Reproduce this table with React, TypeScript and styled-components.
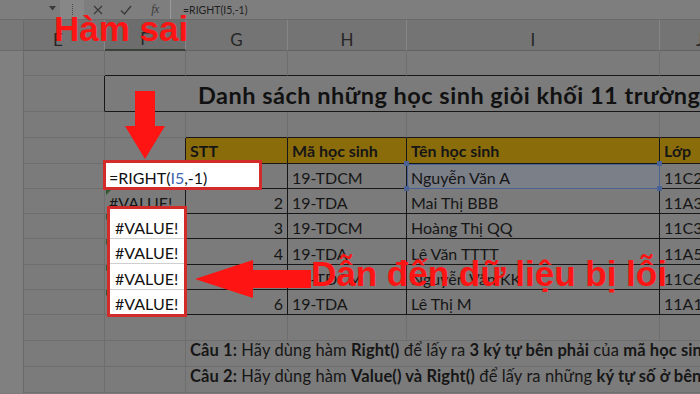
import React from 'react';
import styled, { createGlobalStyle } from 'styled-components';

const GlobalStyle = createGlobalStyle`
  html, body {
    margin: 0;
    padding: 0;
    background: #7b7b7b;
  }
  body {
    width: 700px;
    height: 394px;
    overflow: hidden;
    font-family: Lato, "Open Sans", sans-serif;
  }
`;

type Line = 'grid' | 'dark' | 'none';

const lineColor = (l: Line | undefined) =>
  l === 'dark' ? '#171717' : l === 'none' ? 'transparent' : '#6e6e6e';

type Row = {
  f?: string;
  stt: string;
  code: string;
  name: string;
  cls: string;
  selected?: boolean;
};

const rows: Row[] = [
  { stt: '', code: '19-TDCM', name: 'Nguyễn Văn A', cls: '11C2', selected: true },
  { f: '#VALUE!', stt: '2', code: '19-TDA', name: 'Mai Thị BBB', cls: '11A3' },
  { f: '#VALUE!', stt: '3', code: '19-TDCM', name: 'Hoàng Thị QQ', cls: '11C3' },
  { f: '#VALUE!', stt: '4', code: '19-TDA', name: 'Lê Văn TTTT', cls: '11A5' },
  { f: '#VALUE!', stt: '5', code: '19-TDCM', name: 'Nguyễn Văn KK', cls: '11C6' },
  { f: '#VALUE!', stt: '6', code: '19-TDA', name: 'Lê Thị M', cls: '11A1' },
];

const letters = ['E', 'F', 'G', 'H', 'I', 'J'];

const BlankRow: React.FC<{ bottom?: Line[] }> = ({ bottom = [] }) => (
  <>
    <RowHead />
    {letters.map((l, i) => (
      <Cell key={l} $bottom={bottom[i]} />
    ))}
  </>
);

export default function App() {
  return (
    <Page>
      <GlobalStyle />
      <FormulaBar>
        <NameBox />
        <Caret>
          <svg width="7" height="5" viewBox="0 0 7 5">
            <path d="M0 0 L7 0 L3.5 4.5 Z" fill="#3a3a3a" />
          </svg>
        </Caret>
        <Grip>
          <Dots />
        </Grip>
        <BarButton>
          <svg width="10" height="10" viewBox="0 0 10 10">
            <path d="M1 1 L9 9 M9 1 L1 9" stroke="#3b3b3b" strokeWidth="1.3" />
          </svg>
        </BarButton>
        <BarButton>
          <svg width="12" height="10" viewBox="0 0 12 10">
            <path d="M1 5.5 L4.5 9 L11 1" stroke="#3b3b3b" strokeWidth="1.4" fill="none" />
          </svg>
        </BarButton>
        <BarButton $wide>
          <Fx>fx</Fx>
        </BarButton>
        <Formula>=RIGHT(I5,-1)</Formula>
      </FormulaBar>

      <Sheet>
        <Corner />
        {letters.map((l) => (
          <ColHead key={l} $active={l === 'F'} $shift={l === 'E' ? 12 : 0}>
            {l}
          </ColHead>
        ))}

        <BlankRow bottom={['grid', 'dark', 'dark', 'dark', 'dark', 'dark']} />

        <RowHead />
        <Cell $right="dark" />
        <Title>Danh sách những học sinh giỏi khối 11 trường</Title>

        <BlankRow bottom={['grid', 'grid', 'dark', 'dark', 'dark', 'dark']} />

        <RowHead />
        <Cell />
        <Cell $right="dark" />
        <Cell $head $right="dark" $bottom="dark">STT</Cell>
        <Cell $head $right="dark" $bottom="dark">Mã học sinh</Cell>
        <Cell $head $right="dark" $bottom="dark">Tên học sinh</Cell>
        <Cell $head $right="dark" $bottom="dark">Lớp</Cell>

        {rows.map((r, i) => (
          <React.Fragment key={i}>
            <RowHead />
            <Cell />
            <Cell $right="dark" $flag={!!r.f}>
              {r.f}
            </Cell>
            <Cell $right="dark" $bottom="dark" $align="right">
              {r.stt}
            </Cell>
            <Cell $right="dark" $bottom="dark">
              {r.code}
            </Cell>
            <Cell $right="dark" $bottom="dark" $selected={r.selected}>
              {r.name}
              {r.selected && (
                <>
                  <Handle $x="left" $y="top" />
                  <Handle $x="left" $y="bottom" />
                  <Handle $x="right" $y="top" />
                  <Handle $x="right" $y="bottom" />
                </>
              )}
            </Cell>
            <Cell $right="dark" $bottom="dark">
              {r.cls}
            </Cell>
          </React.Fragment>
        ))}

        <BlankRow />

        <RowHead />
        <Cell />
        <Cell />
        <Note>
          <span>
            <b>Câu 1:</b> Hãy dùng hàm <b>Right()</b> để lấy ra <b>3 ký tự bên phải</b> của{' '}
            <b>mã học sinh</b>
          </span>
        </Note>

        <RowHead />
        <Cell />
        <Cell />
        <Note>
          <span>
            <b>Câu 2:</b> Hãy dùng hàm <b>Value() và Right()</b> để lấy ra những{' '}
            <b>ký tự số ở bên phải</b>
          </span>
        </Note>
      </Sheet>

      <Callout $left={54} $top={11} $size={35}>Hàm sai</Callout>
      <Arrow $left={120} $top={88} width="50" height="75" viewBox="0 0 50 75">
        <polygon points="15,3 35,3 35,38 45,38 25,71 5,38 15,38" fill="#ff1414" />
      </Arrow>

      <FormulaBox>
        =RIGHT(<Ref>I5</Ref>,-1)
      </FormulaBox>

      <ErrorBox>
        {[30, 25.3, 25.4, 24.4].map((h, i) => (
          <ErrorCell key={i} $h={h}>
            #VALUE!
          </ErrorCell>
        ))}
      </ErrorBox>

      <Arrow $left={190} $top={255} width="125" height="50" viewBox="0 0 125 50">
        <polygon points="5,24 63,5 63,15 121,15 121,33 63,33 63,43" fill="#ff1414" />
      </Arrow>
      <Callout $left={311} $top={256} $size={35}>Dẫn đến dữ liệu bị lỗi</Callout>
    </Page>
  );
}

const Page = styled.div`
  position: relative;
  width: 700px;
  height: 394px;
  overflow: hidden;
  background: #7b7b7b;
  display: flex;
  flex-direction: column;
`;

const FormulaBar = styled.div`
  display: flex;
  align-items: stretch;
  height: 20px;
  flex: none;
  background: #7e7e7e;
  border-bottom: 1px solid #6a6a6a;
  box-sizing: border-box;
`;

const NameBox = styled.div`
  width: 45px;
`;

const Caret = styled.div`
  width: 15px;
  display: flex;
  align-items: center;
  justify-content: center;
  padding-bottom: 3px;
  box-sizing: border-box;
`;

const Grip = styled.div`
  width: 24px;
  background: #878787;
  display: flex;
  justify-content: center;
  align-items: center;
`;

const Dots = styled.div`
  width: 0;
  height: 11px;
  border-left: 1px dotted #4a4a4a;
`;

const BarButton = styled.div<{ $wide?: boolean }>`
  width: ${({ $wide }) => ($wide ? '30px' : '28px')};
  display: flex;
  align-items: center;
  justify-content: center;
  border-right: ${({ $wide }) => ($wide ? '1px solid #9a9a9a' : 'none')};
`;

const Fx = styled.span`
  font-family: "Liberation Serif", serif;
  font-style: italic;
  font-size: 12px;
  color: #3b3b3b;
  letter-spacing: -0.5px;
`;

const Formula = styled.div`
  display: flex;
  align-items: center;
  padding-left: 12px;
  font-size: 10.5px;
  color: #1e1e1e;
`;

const Sheet = styled.div`
  display: grid;
  grid-template-columns: 24px 81px 81px 102px 119px 253px 80px;
  grid-template-rows: 31px 25px 36px 25.5px 26px repeat(6, 25.3px) 25.5px 26px 26px;
  width: 720px;
  flex: none;
`;

const Corner = styled.div`
  background: #787878;
  border-right: 1px solid #6a6a6a;
  border-bottom: 1px solid #6a6a6a;
`;

const ColHead = styled.div<{ $active?: boolean; $shift?: number }>`
  display: flex;
  align-items: flex-end;
  justify-content: center;
  box-sizing: border-box;
  padding-right: ${({ $shift }) => $shift || 0}px;
  font-size: 17px;
  line-height: 1.2;
  color: #262626;
  background: ${({ $active }) => ($active ? '#6d6d6d' : '#747474')};
  border-right: 1px solid #858585;
  border-bottom: ${({ $active }) => ($active ? '2px solid #384238' : '1px solid #626262')};
`;

const RowHead = styled.div`
  background: #808080;
  border-right: 1px solid #6a6a6a;
`;

const Cell = styled.div<{
  $right?: Line;
  $bottom?: Line;
  $head?: boolean;
  $align?: 'left' | 'right';
  $selected?: boolean;
  $flag?: boolean;
}>`
  position: relative;
  display: flex;
  align-items: flex-end;
  justify-content: ${({ $align }) => ($align === 'right' ? 'flex-end' : 'flex-start')};
  box-sizing: border-box;
  padding: 0 4px ${({ $head }) => ($head ? '2px' : '1px')};
  white-space: nowrap;
  overflow: ${({ $selected }) => ($selected ? 'visible' : 'hidden')};
  z-index: ${({ $selected }) => ($selected ? 1 : 'auto')};
  font-size: 16px;
  line-height: 1.2;
  color: #161616;
  font-weight: ${({ $head }) => ($head ? 700 : 400)};
  background: ${({ $head, $selected }) =>
    $head ? '#8b6c0b' : $selected ? '#7b7f88' : 'transparent'};
  border-right: 1px solid ${({ $right }) => lineColor($right)};
  border-bottom: 1px solid ${({ $bottom }) => lineColor($bottom)};
  outline: ${({ $selected }) => ($selected ? '1.5px solid #4a6394' : 'none')};
  outline-offset: -1px;

  &::before {
    content: '';
    display: ${({ $flag }) => ($flag ? 'block' : 'none')};
    position: absolute;
    left: 1px;
    top: 0;
    border-top: 6px solid #2f5a2f;
    border-right: 6px solid transparent;
  }
`;

const Handle = styled.span<{ $x: 'left' | 'right'; $y: 'top' | 'bottom' }>`
  position: absolute;
  width: 5px;
  height: 5px;
  background: #4a6394;
  ${({ $x }) => $x}: -3px;
  ${({ $y }) => $y}: -3px;
`;

const Title = styled.div`
  grid-column: 3 / 8;
  display: flex;
  align-items: flex-end;
  padding: 0 0 2px 93px;
  box-sizing: border-box;
  white-space: nowrap;
  overflow: hidden;
  font-size: 23.5px;
  letter-spacing: 0.5px;
  font-weight: 700;
  line-height: 1.2;
  color: #111;
  border-bottom: 1px solid #171717;
`;

const Note = styled.div`
  grid-column: 4 / 8;
  display: flex;
  align-items: flex-end;
  padding: 0 0 5px 4px;
  box-sizing: border-box;
  white-space: nowrap;
  overflow: hidden;
  font-size: 16.5px;
  letter-spacing: 0.1px;
  line-height: 1.2;
  color: #161616;
  border-bottom: 1px solid #6e6e6e;

  b {
    font-weight: 700;
  }
`;

const Callout = styled.div<{ $left: number; $top: number; $size: number }>`
  position: absolute;
  left: ${({ $left }) => $left}px;
  top: ${({ $top }) => $top}px;
  z-index: 5;
  font-family: "Liberation Sans", Arial, sans-serif;
  font-weight: 700;
  font-size: ${({ $size }) => $size}px;
  line-height: 1;
  white-space: nowrap;
  color: #ff1414;
`;

const Arrow = styled.svg<{ $left: number; $top: number }>`
  position: absolute;
  left: ${({ $left }) => $left}px;
  top: ${({ $top }) => $top}px;
  z-index: 5;
`;

const FormulaBox = styled.div`
  position: absolute;
  left: 103px;
  top: 160px;
  width: 159px;
  height: 30px;
  box-sizing: border-box;
  z-index: 3;
  display: flex;
  align-items: flex-end;
  padding: 0 0 0 3px;
  background: #fff;
  border: 3px solid #d32a2a;
  font-size: 16px;
  line-height: 1.2;
  color: #111;
`;

const Ref = styled.span`
  color: #3f66ad;
`;

const ErrorBox = styled.div`
  position: absolute;
  left: 107px;
  top: 206px;
  width: 80px;
  height: 111px;
  box-sizing: border-box;
  z-index: 3;
  display: flex;
  flex-direction: column;
  background: #fff;
  border: 3px solid #d32a2a;
`;

const ErrorCell = styled.div<{ $h: number }>`
  height: ${({ $h }) => $h}px;
  flex: none;
  display: flex;
  align-items: flex-end;
  box-sizing: border-box;
  padding: 0 0 1px 5px;
  font-size: 16px;
  line-height: 1.2;
  color: #111;
  border-bottom: 1px solid #cfcfcf;

  &:last-child {
    border-bottom: none;
  }
`;
